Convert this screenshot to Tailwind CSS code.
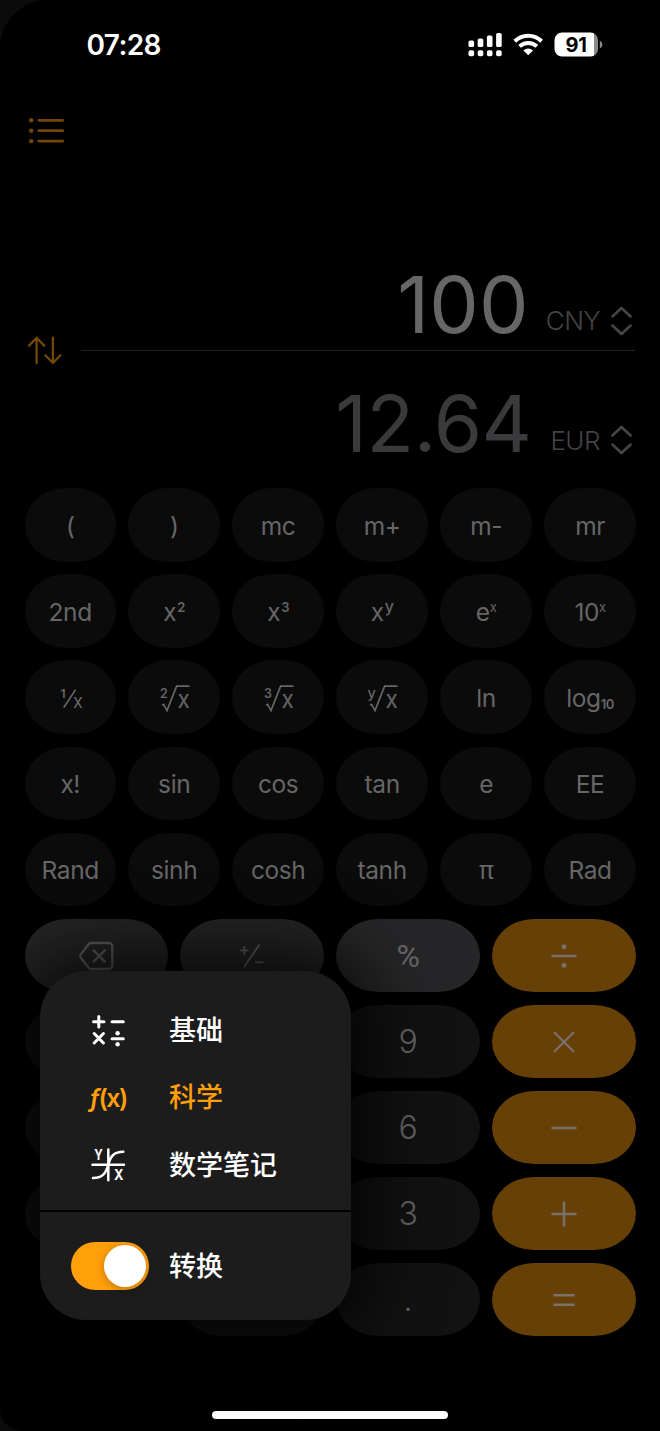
<!DOCTYPE html>
<html lang="zh-CN">
<head>
<meta charset="utf-8">
<meta name="viewport" content="width=device-width, initial-scale=1">
<title>计算器</title>
<script src="https://cdn.jsdelivr.net/npm/@tailwindcss/browser@4"></script>
</head>
<body class="bg-[#0b0b0b] font-['Inter','Noto_Sans_CJK_SC',sans-serif]">
<div class="relative w-[660px] h-[1431px] overflow-hidden bg-black rounded-tl-[48px] rounded-bl-[22px] flex flex-col">

  <!-- Status bar -->
  <header class="h-[89px] shrink-0 flex items-center pl-[86.5px] pr-[57px] text-white">
    <div class="text-[28px] font-semibold leading-none tracking-[-0.6px]">07:28</div>
    <svg class="ml-auto" width="135" height="26" viewBox="0 0 135 26">
      <g fill="#fff">
        <rect x="0.5" y="8.5" width="5.6" height="6.6" rx="1.6"/><rect x="9.7" y="6.5" width="5.6" height="8.6" rx="1.6"/><rect x="18.9" y="3.5" width="5.6" height="11.6" rx="1.6"/><rect x="28.1" y="1.1" width="5.6" height="14" rx="1.6"/>
        <rect x="0.5" y="18.2" width="5.6" height="6" rx="1.8"/><rect x="9.7" y="18.2" width="5.6" height="6" rx="1.8"/><rect x="18.9" y="18.2" width="5.6" height="6" rx="1.8"/><rect x="28.1" y="18.2" width="5.6" height="6" rx="1.8"/>
        <path d="M60.2 23.3 55.4 18.6a6.8 6.8 0 0 1 9.6 0Z"/>
      </g>
      <g fill="none" stroke="#fff" stroke-width="4">
        <path d="M46.8 9.2a19.2 19.2 0 0 1 26.8 0"/>
        <path d="M51.6 14.4a12.4 12.4 0 0 1 17.2 0"/>
      </g>
      <clipPath id="batt"><rect x="86.5" y="0.5" width="43.5" height="24" rx="7.5"/></clipPath>
      <g clip-path="url(#batt)"><rect x="86" y="0" width="40" height="26" fill="#fff"/><rect x="126" y="0" width="5" height="26" fill="#8a8a8a"/></g>
      <path d="M131.8 8.8q2.6 1 2.6 3.8t-2.6 3.8Z" fill="#8a8a8a"/>
      <text x="108" y="19.6" text-anchor="middle" font-size="20" font-weight="700" letter-spacing="-0.3" fill="#000">91</text>
    </svg>
  </header>

  <!-- History button -->
  <div class="h-[84px] shrink-0 pl-[28px] pt-[27px]">
    <svg width="37" height="30" viewBox="0 0 37 30" fill="none" stroke="#714806" stroke-width="2.7" stroke-linecap="round">
      <path d="M10.8 4.3H34.7M10.8 14.7H34.7M10.8 25.1H34.7"/>
      <g fill="#714806" stroke="none"><circle cx="3.2" cy="4.3" r="2.2"/><circle cx="3.2" cy="14.7" r="2.2"/><circle cx="3.2" cy="25.1" r="2.2"/></g>
    </svg>
  </div>

  <!-- Conversion display -->
  <main class="shrink-0 h-[315.4px] pt-[83px] flex flex-col pr-[25px]">
    <div class="h-[74px] flex items-baseline justify-end leading-[98px]">
      <span class="text-[78.5px] text-[#666] tracking-[0.2px]">100</span>
      <span class="ml-[17px] text-[26px] leading-none font-light text-[#444446] tracking-[-0.6px]"><span class="align-[3px]">CNY</span></span>
      <svg class="ml-[10px] mr-[2px] self-end mb-[-6px]" width="23" height="30" viewBox="0 0 23 30" fill="none" stroke="#454547" stroke-width="2.7" stroke-linecap="round" stroke-linejoin="round"><path d="M2.4 10.4 11.5 2 20.6 10.4M2.4 19.6 11.5 28 20.6 19.6"/></svg>
    </div>
    <div class="h-[40px] flex items-center pl-[27px]">
      <svg class="shrink-0" width="36" height="30" viewBox="0 0 36 30" fill="none" stroke="#714806" stroke-width="2.3" stroke-linecap="round" stroke-linejoin="round"><path d="M9.6 28V3M2 10.6 9.6 2.8 17.2 10.6M25.900 2.600V28M18.300 20.200 25.900 28 33.500 20.200"/></svg>
      <div class="ml-[18px] flex-1 h-px bg-[#212121]"></div>
    </div>
    <div class="h-[102px] flex items-baseline justify-end leading-[108px]">
      <span class="text-[78px] text-[#3a3a3c] tracking-[-0.5px]">12.64</span>
      <span class="ml-[19px] text-[26px] leading-none font-light text-[#444446] tracking-[-0.5px]"><span class="align-[2px]">EUR</span></span>
      <svg class="ml-[10px] mr-[2px] self-end mb-[17px]" width="23" height="30" viewBox="0 0 23 30" fill="none" stroke="#454547" stroke-width="2.7" stroke-linecap="round" stroke-linejoin="round"><path d="M2.4 10.4 11.5 2 20.6 10.4M2.4 19.6 11.5 28 20.6 19.6"/></svg>
    </div>
  </main>

  <!-- Scientific keys -->
  <section class="shrink-0 ml-[24.5px] w-[611.3px] grid grid-cols-6 gap-x-[12.6px] gap-y-[12.8px] text-[#666] text-[24.5px] tracking-[-0.4px] [&>div]:h-[73.25px] [&>div]:flex [&>div]:items-center [&>div]:justify-center [&>div]:bg-[#0b0b0b] [&>div]:rounded-[40px/36.6px] [&>div]:pt-[2px] [&>.art]:pt-0">
    <div>(</div><div>)</div><div>mc</div><div>m+</div><div>m-</div><div>mr</div>

    <div>2nd</div>
    <div><p>x<span class="ml-px text-[13px] font-semibold leading-none align-[9px]">2</span></p></div>
    <div><p>x<span class="ml-px text-[13px] font-semibold leading-none align-[9px]">3</span></p></div>
    <div><p>x<span class="ml-px text-[16px] font-medium leading-none align-[9px]">y</span></p></div>
    <div><p>e<span class="text-[13px] leading-none align-[9px]">x</span></p></div>
    <div><p>10<span class="text-[13px] leading-none align-[9px]">x</span></p></div>

    <div class="art"><svg width="91" height="73" viewBox="0 0 91 73" fill="#666"><text x="35.5" y="36.500" font-size="12" font-weight="600">1</text><text x="48" y="46.800" font-size="19" textLength="9.500" lengthAdjust="spacingAndGlyphs">x</text><path d="M38.8 46.5 50.6 28.6" stroke="#666" stroke-width="1.7"/></svg></div>
    <div class="art"><svg width="91" height="73" viewBox="0 0 91 73" fill="#666"><text x="31" y="37.3" font-size="12.500" font-weight="600">2</text><text x="48.600" y="46.800" font-size="24.500" textLength="12" lengthAdjust="spacingAndGlyphs">x</text><path d="M33 44.4 34.6 43.4 38 49.6 47.6 25.2H60.5" fill="none" stroke="#666" stroke-width="1.7"/></svg></div>
    <div class="art"><svg width="91" height="73" viewBox="0 0 91 73" fill="#666"><text x="31" y="37.3" font-size="12.500" font-weight="600">3</text><text x="48.600" y="46.800" font-size="24.500" textLength="12" lengthAdjust="spacingAndGlyphs">x</text><path d="M33 44.4 34.6 43.4 38 49.6 47.6 25.2H60.5" fill="none" stroke="#666" stroke-width="1.7"/></svg></div>
    <div class="art"><svg width="91" height="73" viewBox="0 0 91 73" fill="#666"><text x="30.500" y="36.5" font-size="14.500" font-weight="500">y</text><text x="48.600" y="46.800" font-size="24.500" textLength="12" lengthAdjust="spacingAndGlyphs">x</text><path d="M33 44.4 34.6 43.4 38 49.6 47.6 25.2H60.5" fill="none" stroke="#666" stroke-width="1.7"/></svg></div>
    <div>ln</div>
    <div><p>log<span class="text-[13px] font-semibold leading-none align-[-2px]">10</span></p></div>

    <div>x!</div><div>sin</div><div>cos</div><div>tan</div><div>e</div><div>EE</div>
    <div>Rand</div><div>sinh</div><div>cosh</div><div>tanh</div><div>π</div><div>Rad</div>
  </section>

  <!-- Basic keys -->
  <section class="shrink-0 mt-[12.8px] ml-[24.5px] w-[611.3px] grid grid-cols-4 gap-x-[12.6px] gap-y-[12.8px] text-[#666] text-[32px] font-[350] [&>div]:h-[73.25px] [&>div]:flex [&>div]:items-center [&>div]:justify-center [&>div]:rounded-[42px/36.6px] [&>div]:pt-px">
    <div class="bg-[#262628]"><svg width="35" height="30" viewBox="0 0 35 30" fill="none" stroke="#666" stroke-width="2.3" stroke-linecap="round" stroke-linejoin="round"><path d="M12.2 2H30a3.3 3.3 0 0 1 3.3 3.3v19.4A3.3 3.3 0 0 1 30 28H12.2a3.3 3.3 0 0 1-2.4-1L2 17q-1.6-2 0-4L9.8 3a3.3 3.3 0 0 1 2.4-1ZM14.6 9.4 25.8 20.6M25.8 9.4 14.6 20.6"/></svg></div>
    <div class="bg-[#262628]"><svg width="24" height="24" viewBox="0 0 24 24" fill="none" stroke="#666" stroke-width="1.8" stroke-linecap="round"><path d="M4.3 2.6V10M.9 6.3H7.8M4.4 22.5 19 1.2M15.8 18.3H22.8"/></svg></div>
    <div class="bg-[#262628]"><span class="font-['Roboto'] font-normal">%</span></div>
    <div class="bg-[#664006]"><svg width="28" height="28" viewBox="0 0 28 28" fill="none" stroke="#797169" stroke-width="2.5" stroke-linecap="round"><path d="M2.5 14H25.5"/><g fill="#797169" stroke="none"><circle cx="14" cy="4.8" r="2.5"/><circle cx="14" cy="23.2" r="2.5"/></g></svg></div>

    <div class="bg-[#121212]">7</div><div class="bg-[#121212]">8</div><div class="bg-[#121212]">9</div>
    <div class="bg-[#664006]"><svg width="28" height="28" viewBox="0 0 28 28" fill="none" stroke="#797169" stroke-width="2.3" stroke-linecap="round"><path d="M4.7 4.7 23.3 23.3M23.3 4.7 4.7 23.3"/></svg></div>

    <div class="bg-[#121212]">4</div><div class="bg-[#121212]">5</div><div class="bg-[#121212]">6</div>
    <div class="bg-[#664006]"><svg width="28" height="28" viewBox="0 0 28 28" fill="none" stroke="#797169" stroke-width="2.5" stroke-linecap="round"><path d="M2.5 14H25.5"/></svg></div>

    <div class="bg-[#121212]">1</div><div class="bg-[#121212]">2</div><div class="bg-[#121212]">3</div>
    <div class="bg-[#664006]"><svg width="28" height="28" viewBox="0 0 28 28" fill="none" stroke="#797169" stroke-width="2.5" stroke-linecap="round"><path d="M2.5 14H25.5M14 2.5V25.5"/></svg></div>

    <div></div><div class="bg-[#121212]">0</div><div class="bg-[#121212]">.</div>
    <div class="bg-[#664006]"><svg width="28" height="28" viewBox="0 0 28 28" fill="none" stroke="#797169" stroke-width="2.4" stroke-linecap="round"><path d="M4.3 9.2H23.7M4.3 18.8H23.7"/></svg></div>
  </section>

  <!-- Home indicator -->
  <div class="mt-auto mb-[12px] shrink-0 self-center w-[236px] h-[8px] rounded-full bg-white"></div>

  <!-- Mode menu -->
  <nav class="absolute left-[40px] top-[970.5px] w-[311px] h-[349.5px] rounded-[46px] bg-[#1c1c1c] shadow-[0_0_70px_22px_rgba(0,0,0,0.8)] flex flex-col text-white text-[27px] font-medium leading-none">
    <div class="h-[239.5px] pt-[26px] flex flex-col">
      <div class="h-[67.5px] flex items-center pl-[46px]">
        <svg width="44" height="36" viewBox="0 0 44 36" fill="none" stroke="#fff" stroke-width="3" stroke-linecap="round"><path d="M7.5 9.7H18M12.8 4.4V15M26 9.7H37.3M8.2 21.5 17.4 31M17.4 21.5 8.2 31M26 26.8H37.3"/><g fill="#fff" stroke="none"><circle cx="31.6" cy="21.3" r="2.2"/><circle cx="31.6" cy="32.2" r="2.2"/></g></svg>
        <span class="ml-[39px] pt-px">基础</span>
      </div>
      <div class="h-[67.5px] flex items-center pl-[46px] text-[#ff9f0a]">
        <div class="w-[44px] h-[30px] flex items-center justify-center text-[25px] leading-[30px] tracking-[-1.5px]"><span class="italic font-semibold">ƒ</span><span class="font-semibold">(x)</span></div>
        <span class="ml-[39px]">科学</span>
      </div>
      <div class="h-[67.5px] flex items-center pl-[46px]">
        <svg width="44" height="36" viewBox="0 0 44 36" fill="none" stroke="#fff" stroke-width="2.5" stroke-linecap="round"><path d="M6.500 17.700H38M22.300 2.500V33.300M7 31C17 31 20 26 22.300 17.700 24.500 9 28 4.800 37.300 4.800"/><g fill="#fff" stroke="none" font-size="14" font-weight="700"><text x="8.300" y="13" textLength="8.500" lengthAdjust="spacingAndGlyphs">Y</text><text x="28" y="33" textLength="9.500" lengthAdjust="spacingAndGlyphs">X</text></g></svg>
        <span class="ml-[39px]">数学笔记</span>
      </div>
    </div>
    <div class="h-[1.5px] bg-black"></div>
    <div class="flex-1 flex items-center pl-[30.5px]">
      <div class="w-[78.5px] h-[48px] rounded-full bg-[#ff9f0a] flex items-center justify-end pr-[3px]"><div class="size-[42px] rounded-full bg-white shadow-[0_2px_8px_rgba(0,0,0,0.25)]"></div></div>
      <span class="ml-[20px] pt-[2px]">转换</span>
    </div>
  </nav>
</div>
</body>
</html>
